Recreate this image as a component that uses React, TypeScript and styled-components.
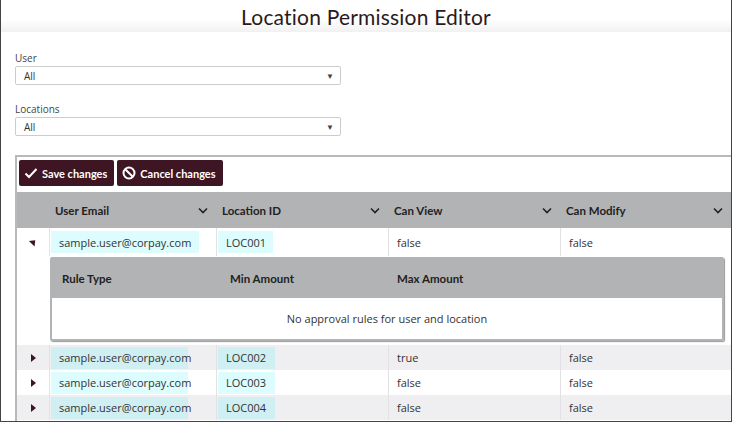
import styled, { createGlobalStyle } from "styled-components";

const GlobalStyle = createGlobalStyle`
  html, body { margin: 0; padding: 0; background: #fff; }
  body { font-family: "Open Sans", "Liberation Sans", sans-serif; color: #333; }
`;

const Frame = styled.div`
  width: 732px;
  height: 422px;
  box-sizing: border-box;
  border: 1px solid #444;
  border-top: none;
  overflow: hidden;
  display: flex;
  flex-direction: column;
`;

const Header = styled.header`
  height: 32px;
  flex: none;
  display: flex;
  align-items: center;
  justify-content: center;
  background: linear-gradient(#fff 60%, #f1f1f1);
  font-family: Lato, "Liberation Sans", sans-serif;
  font-size: 21px;
  color: #2a1a20;
  letter-spacing: 0.2px;
`;

const Filters = styled.div`
  padding: 19px 0 0 14px;
  display: flex;
  flex-direction: column;
  gap: 17px;
`;

const Field = styled.label`
  display: flex;
  flex-direction: column;
  font-size: 10px;
  color: #444;
  gap: 1px;
`;

const Select = styled.div`
  width: 326px;
  height: 19px;
  box-sizing: border-box;
  border: 1px solid #ccc;
  border-radius: 2px;
  display: flex;
  align-items: center;
  justify-content: space-between;
  padding: 0 6px 0 8px;
  font-size: 10px;
  color: #333;
  &::after { content: "▼"; font-size: 8px; color: #444; }
`;

const Grid = styled.section`
  margin: 19px 0 0 14px;
  flex: 1;
  border-top: 2px solid #b9b9b9;
  border-left: 2px solid #b9b9b9;
  display: flex;
  flex-direction: column;
`;

const Toolbar = styled.div`
  display: flex;
  gap: 3px;
  padding: 3px 2px 6px;
`;

const Button = styled.button`
  height: 26px;
  border: none;
  border-radius: 2px;
  background: #3e1522;
  color: #fff;
  font-family: Lato, "Liberation Sans", sans-serif;
  font-weight: 700;
  font-size: 11px;
  display: flex;
  align-items: center;
  gap: 4px;
  padding: 0 7px 0 5px;
`;

const cols = "32px 167px 172px 172px 1fr";

const HeadRow = styled.div`
  display: grid;
  grid-template-columns: ${cols};
  height: 36px;
  background: #b1b3b4;
  font-family: Lato, "Liberation Sans", sans-serif;
  font-weight: 700;
  font-size: 11.5px;
  color: #222;
`;

const HeadCell = styled.div`
  display: flex;
  align-items: center;
  justify-content: space-between;
  padding: 0 8px 0 6px;
`;

const Row = styled.div<{ $alt?: boolean; $h?: number }>`
  display: grid;
  grid-template-columns: ${cols};
  height: ${(p) => p.$h ?? 25}px;
  background: ${(p) => (p.$alt ? "#efeff2" : "#fff")};
  font-size: 11px;
`;

const Cell = styled.div<{ $first?: boolean }>`
  display: flex;
  align-items: center;
  padding: 0 ${(p) => (p.$first ? 0 : 8)}px 0 ${(p) => (p.$first ? 0 : 8)}px;
  border-left: ${(p) => (p.$first ? "none" : "1px solid #e2e2e2")};
  justify-content: ${(p) => (p.$first ? "center" : "flex-start")};
`;

const Chip = styled.span<{ $alt?: boolean; $w: number }>`
  display: flex;
  align-items: center;
  height: 22px;
  width: ${(p) => p.$w}px;
  margin-left: -7px;
  padding-left: 8px;
  box-sizing: border-box;
  background: ${(p) => (p.$alt ? "#d0eff2" : "#dcfcfd")};
`;

const Arrow = styled.span<{ $open?: boolean }>`
  width: 0;
  height: 0;
  border-top: 4px solid transparent;
  border-bottom: 4px solid transparent;
  border-left: 5px solid #3e1522;
  transform: ${(p) => (p.$open ? "rotate(-45deg)" : "none")};
`;

const Detail = styled.div`
  margin: 1px 7px 4px 33px;
  border: 2px solid #b1b3b4;
  border-radius: 2px;
  box-shadow: 1px 1px 1px #999;
`;

const DetailHead = styled.div`
  display: grid;
  grid-template-columns: 168px 167px 1fr;
  height: 39px;
  align-items: center;
  background: #b1b3b4;
  font-family: Lato, "Liberation Sans", sans-serif;
  font-weight: 700;
  font-size: 11.5px;
  color: #222;
  padding-left: 10px;
`;

const Empty = styled.div`
  height: 41px;
  display: flex;
  align-items: center;
  justify-content: center;
  font-size: 11px;
`;

const Chevron = () => (
  <svg width="10" height="7" viewBox="0 0 10 7">
    <path d="M1 1.5 5 5.5 9 1.5" fill="none" stroke="#222" strokeWidth="1.6" />
  </svg>
);

const rows = [
  { loc: "LOC002", view: "true" },
  { loc: "LOC003", view: "false" },
  { loc: "LOC004", view: "false" },
];

export default function App() {
  return (
    <Frame>
      <GlobalStyle />
      <Header>Location Permission Editor</Header>
      <Filters>
        <Field>
          User
          <Select>All</Select>
        </Field>
        <Field>
          Locations
          <Select>All</Select>
        </Field>
      </Filters>
      <Grid>
        <Toolbar>
          <Button>
            <svg width="14" height="12" viewBox="0 0 14 12">
              <path d="M1.5 6.5 5 10 12.5 2" fill="none" stroke="#fff" strokeWidth="2" />
            </svg>
            Save changes
          </Button>
          <Button>
            <svg width="14" height="14" viewBox="0 0 14 14">
              <circle cx="7" cy="7" r="5.5" fill="none" stroke="#fff" strokeWidth="2" />
              <path d="M3.2 3.2 10.8 10.8" stroke="#fff" strokeWidth="2" />
            </svg>
            Cancel changes
          </Button>
        </Toolbar>
        <HeadRow>
          <HeadCell />
          {["User Email", "Location ID", "Can View", "Can Modify"].map((h) => (
            <HeadCell key={h}>
              {h}
              <Chevron />
            </HeadCell>
          ))}
        </HeadRow>
        <Row $h={28}>
          <Cell $first>
            <Arrow $open />
          </Cell>
          <Cell>
            <Chip $w={148}>sample.user@corpay.com</Chip>
          </Cell>
          <Cell>
            <Chip $w={55}>LOC001</Chip>
          </Cell>
          <Cell>false</Cell>
          <Cell>false</Cell>
        </Row>
        <Detail>
          <DetailHead>
            <span>Rule Type</span>
            <span>Min Amount</span>
            <span>Max Amount</span>
          </DetailHead>
          <Empty>No approval rules for user and location</Empty>
        </Detail>
        {rows.map((r, i) => (
          <Row key={r.loc} $alt={i % 2 === 0}>
            <Cell $first>
              <Arrow />
            </Cell>
            <Cell>
              <Chip $w={137} $alt={i % 2 === 0}>sample.user@corpay.com</Chip>
            </Cell>
            <Cell>
              <Chip $w={57} $alt={i % 2 === 0}>{r.loc}</Chip>
            </Cell>
            <Cell>{r.view}</Cell>
            <Cell>false</Cell>
          </Row>
        ))}
      </Grid>
    </Frame>
  );
}
